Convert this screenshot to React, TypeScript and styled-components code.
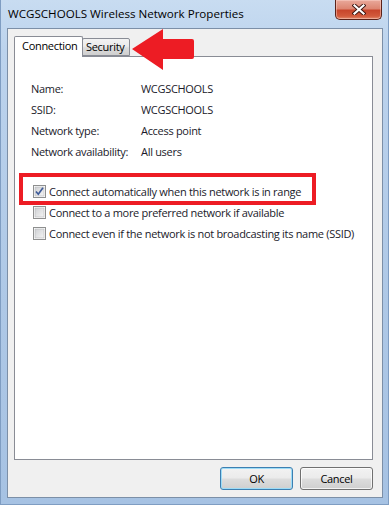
import React from 'react';
import styled, { createGlobalStyle } from 'styled-components';

const Global = createGlobalStyle`
  html, body { margin: 0; padding: 0; background: #ffffff; }
  body { font-family: "Open Sans", "Noto Sans", sans-serif; font-size: 11px; letter-spacing: -0.3px; color: #000; }
`;

const Window = styled.div`
  position: relative;
  width: 389px;
  height: 505px;
  box-sizing: border-box;
  padding: 0 6px 7px 7px;
  display: flex;
  flex-direction: column;
  overflow: hidden;
  background: linear-gradient(180deg, #c8dcf1 0%, #bcd3ed 10%, #aec8e6 60%, #a6c2e3 100%);
  box-shadow: inset 1px 0 0 #7f9dc2, inset -1px 0 0 #7f9dc2, inset 0 -1px 0 #7f9dc2;
`;

const TitleBar = styled.div`
  height: 28px;
  display: flex;
  align-items: flex-start;
  justify-content: space-between;
`;

const Title = styled.div`
  margin: 6px 0 0 1px;
  line-height: 16px;
  font-size: 11.6px;
  letter-spacing: 0;
  color: #000;
  white-space: nowrap;
`;

const CloseButton = styled.div`
  width: 47px;
  height: 20px;
  margin-right: 1px;
  box-sizing: border-box;
  border: 1px solid #5b2219;
  border-top: none;
  border-radius: 0 0 5px 5px;
  background: linear-gradient(180deg, #e9a99b 0%, #dd8672 45%, #c8462c 55%, #d25a3c 85%, #e38b6c 100%);
  box-shadow: inset 0 0 0 1px rgba(255, 220, 210, 0.45);
  display: flex;
  align-items: center;
  justify-content: center;
`;

const Client = styled.div`
  flex: 1;
  box-sizing: border-box;
  border: 1px solid #7c8fa7;
  background: #f0f0f0;
  padding: 8px 9px 7px 6px;
  display: flex;
  flex-direction: column;
`;

const TabStrip = styled.div`
  height: 20px;
  display: flex;
  align-items: flex-end;
  margin-bottom: -1px;
  position: relative;
  z-index: 1;
`;

const Tab = styled.div<{ $active?: boolean }>`
  box-sizing: border-box;
  flex-shrink: 0;
  border: 1px solid #898c95;
  border-bottom: ${(p) => (p.$active ? 'none' : '1px solid #898c95')};
  border-radius: 2px 2px 0 0;
  height: ${(p) => (p.$active ? '21px' : '18px')};
  width: ${(p) => (p.$active ? '69px' : '48px')};
  margin-left: ${(p) => (p.$active ? '0' : '-1px')};
  margin-bottom: ${(p) => (p.$active ? '0' : '1px')};
  padding-left: ${(p) => (p.$active ? '7px' : '3px')};
  line-height: ${(p) => (p.$active ? '18px' : '16px')};
  background: ${(p) =>
    p.$active
      ? '#ffffff'
      : 'linear-gradient(180deg, #f3f3f3 0%, #ebebeb 45%, #dddddd 55%, #cfcfcf 100%)'};
  white-space: nowrap;
`;

const Panel = styled.div`
  flex: 1;
  box-sizing: border-box;
  border: 1px solid #898c95;
  background: #ffffff;
  padding: 21px 16px 0 16px;
  display: flex;
  flex-direction: column;
`;

const InfoGrid = styled.div`
  display: grid;
  grid-template-columns: 110px 1fr;
  grid-auto-rows: 21px;
  align-items: center;
  white-space: nowrap;
`;

const Label = styled.div`
  color: #1a1a2a;
`;

const Value = styled.div`
  color: #1a1a2a;
`;

const OptionList = styled.div`
  margin: 19px 0 0 2px;
  display: flex;
  flex-direction: column;
`;

const OptionRow = styled.div`
  height: 21px;
  display: flex;
  align-items: center;
  gap: 3px;
  white-space: nowrap;
  color: #1a1a2a;
  & > svg { flex-shrink: 0; }
`;

const Footer = styled.div`
  margin-top: 7px;
  height: 23px;
  display: flex;
  justify-content: flex-end;
  gap: 7px;
`;

const Button = styled.div<{ $default?: boolean }>`
  width: 73px;
  height: 23px;
  box-sizing: border-box;
  border: 1px solid ${(p) => (p.$default ? '#3c7fb1' : '#707070')};
  border-radius: 3px;
  background: linear-gradient(180deg, #f2f2f2 0%, #ebebeb 48%, #dddddd 52%, #cfcfcf 100%);
  box-shadow: ${(p) =>
    p.$default ? 'inset 0 0 0 1px #9ddcf7' : 'inset 0 0 0 1px rgba(255,255,255,0.75)'};
  display: flex;
  align-items: center;
  justify-content: center;
  color: #000;
`;

const RedBox = styled.div`
  position: absolute;
  left: 19px;
  top: 173px;
  width: 297px;
  height: 32px;
  box-sizing: border-box;
  border: 4px solid #ed1c24;
  pointer-events: none;
`;

const Arrow = styled.svg`
  position: absolute;
  left: 131px;
  top: 29px;
`;

const CloseGlyph = () => (
  <svg width="14" height="11" viewBox="0 0 14 11">
    <path d="M2.5 1.5 L11.5 9.5 M11.5 1.5 L2.5 9.5" stroke="#3a1510" strokeWidth="4" strokeLinecap="square" />
    <path d="M2.5 1.5 L11.5 9.5 M11.5 1.5 L2.5 9.5" stroke="#ffffff" strokeWidth="2.2" strokeLinecap="square" />
  </svg>
);

const CheckBox = ({ checked }: { checked?: boolean }) => (
  <svg width="13" height="13" viewBox="0 0 13 13">
    <defs>
      <linearGradient id="cbg" x1="0" y1="0" x2="1" y2="1">
        <stop offset="0" stopColor="#cfd1d4" />
        <stop offset="1" stopColor="#f4f4f4" />
      </linearGradient>
    </defs>
    <rect x="0.5" y="0.5" width="12" height="12" fill="#ffffff" stroke="#8e8f8f" />
    <rect x="2" y="2" width="9" height="9" fill="url(#cbg)" stroke="#b4b6b9" strokeWidth="0.6" />
    {checked && (
      <path d="M3 6.5 L5.3 9.2 L10 2.8" fill="none" stroke="#3e5b99" strokeWidth="1.7" />
    )}
  </svg>
);

const info: [string, string][] = [
  ['Name:', 'WCGSCHOOLS'],
  ['SSID:', 'WCGSCHOOLS'],
  ['Network type:', 'Access point'],
  ['Network availability:', 'All users'],
];

const options: [string, boolean][] = [
  ['Connect automatically when this network is in range', true],
  ['Connect to a more preferred network if available', false],
  ['Connect even if the network is not broadcasting its name (SSID)', false],
];

export default function App() {
  return (
    <>
      <Global />
      <Window>
        <TitleBar>
          <Title>WCGSCHOOLS Wireless Network Properties</Title>
          <CloseButton>
            <CloseGlyph />
          </CloseButton>
        </TitleBar>
        <Client>
          <TabStrip>
            <Tab $active>Connection</Tab>
            <Tab>Security</Tab>
          </TabStrip>
          <Panel>
            <InfoGrid>
              {info.map(([k, v]) => (
                <React.Fragment key={k}>
                  <Label>{k}</Label>
                  <Value>{v}</Value>
                </React.Fragment>
              ))}
            </InfoGrid>
            <OptionList>
              {options.map(([t, c]) => (
                <OptionRow key={t}>
                  <CheckBox checked={c} />
                  <span>{t}</span>
                </OptionRow>
              ))}
            </OptionList>
          </Panel>
          <Footer>
            <Button $default>OK</Button>
            <Button>Cancel</Button>
          </Footer>
        </Client>
        <RedBox />
        <Arrow width="66" height="42" viewBox="0 0 66 42">
          <path
            d="M1 20 L32 0 L32 10 L61 10 Q63 10 63 12 L63 28 Q63 30 61 30 L32 30 L32 41 Z"
            fill="#ed1c24"
          />
        </Arrow>
      </Window>
    </>
  );
}
